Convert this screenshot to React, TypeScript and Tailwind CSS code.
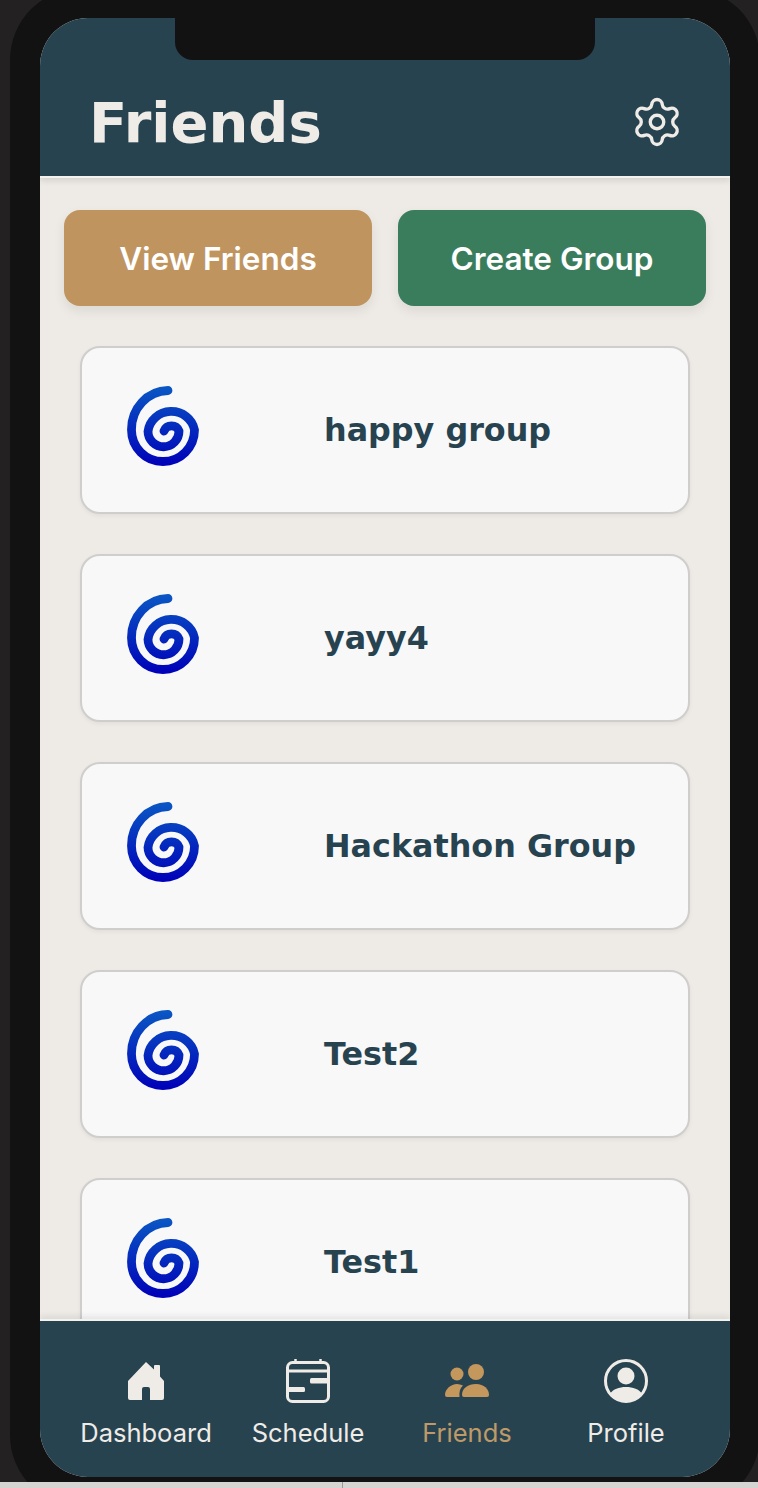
import { Settings } from 'lucide-react'

const groups = ['happy group', 'yayy4', 'Hackathon Group', 'Test2', 'Test1']

function Spiral({ id }: { id: string }) {
  return (
    <svg className="-mt-[8px]" width="72" height="80" viewBox="0 0 72 80" fill="none">
      <defs>
        <linearGradient id={id} gradientUnits="userSpaceOnUse" x1="0" y1="0" x2="0" y2="80">
          <stop offset="0" stopColor="#0a58c4" />
          <stop offset="1" stopColor="#0000b8" />
        </linearGradient>
      </defs>
      <path
        d="M41 4.500A37 39 0 0 0 4.500 44A31.500 31.500 0 0 0 67.500 44A23.500 22.500 0 0 0 21 45.500A15.500 15.500 0 0 0 52 45A8 8 0 0 0 37 45"
        stroke={`url(#${id})`}
        strokeWidth="8.800"
        strokeLinecap="round"
      />
    </svg>
  )
}

function HomeIcon() {
  return (
    <svg width="36" height="38" viewBox="0 0 36 38" fill="#efece8">
      <path d="M18 0L26 7.500V4a1 1 0 0 1 1-1h4a1 1 0 0 1 1 1v10.500L36 19V36a2 2 0 0 1-2 2H22V27a2 2 0 0 0-2-2h-4a2 2 0 0 0-2 2V38H2a2 2 0 0 1-2-2V19Z" />
    </svg>
  )
}

function ScheduleIcon() {
  return (
    <svg width="44" height="44" viewBox="0 0 44 44" fill="none">
      <rect x="1.500" y="3.500" width="41" height="39" rx="5" stroke="#efece8" strokeWidth="3" />
      <path d="M1.500 12H42.500" stroke="#efece8" strokeWidth="3" />
      <path d="M9.500 0V4M34.500 0V4" stroke="#efece8" strokeWidth="2.500" />
      <rect x="24" y="19" width="20" height="5.500" rx="1.500" fill="#efece8" />
      <rect x="0" y="28" width="19" height="5" rx="1.500" fill="#efece8" />
    </svg>
  )
}

function FriendsIcon() {
  return (
    <svg width="44" height="34" viewBox="0 0 44 34" fill="#c4975d">
      <circle cx="31" cy="8" r="8" />
      <circle cx="12" cy="10" r="6.500" />
      <path d="M17 31C17 24 23 20 31 20S44 25 44 31a2 2 0 0 1-2 2H19a2 2 0 0 1-2-2Z" />
      <path d="M0 31C0 25 6 20 12 20c2 0 4 .5 6 1.500C15 24 14 28 14.500 33H2a2 2 0 0 1-2-2Z" />
    </svg>
  )
}

function ProfileIcon() {
  return (
    <svg width="44" height="44" viewBox="0 0 44 44" fill="none">
      <circle cx="22" cy="22" r="20.500" stroke="#efece8" strokeWidth="3" />
      <circle cx="22" cy="17" r="8.500" fill="#efece8" />
      <path d="M6 35C9 30 15 28 22 28S35 30 38 35C34 40 28 43 22 43S10 40 6 35Z" fill="#efece8" />
    </svg>
  )
}

function NavItem({ icon, label, active }: { icon: React.ReactNode; label: string; active?: boolean }) {
  return (
    <div className="flex flex-col items-center">
      <div className="h-[44px] flex items-center justify-center">{icon}</div>
      <span
        className={`mt-[13px] text-[25.500px] leading-[34px] font-['Inter',sans-serif] ${
          active ? 'text-[#bf9a68]' : 'text-[#efece8]'
        }`}
      >
        {label}
      </span>
    </div>
  )
}

export default function App() {
  return (
    <div className="w-[758px] h-[1488px] overflow-hidden flex flex-col bg-[#d6d5d3]">
      <div className="h-[1482px] overflow-hidden bg-[#232122] shrink-0">
        {/* Phone frame */}
        <div className="ml-[10px] -mt-[12px] w-[750px] h-[1519px] p-[30px] rounded-[72px] bg-[#131213]">
          <div className="relative w-[690px] h-[1459px] rounded-[48px] overflow-hidden flex flex-col bg-[#eeebe6]">
            <div className="absolute top-0 left-[135px] w-[420px] h-[42px] rounded-b-[18px] bg-[#131213] z-20" />

            {/* Header */}
            <div className="relative z-10 h-[160px] shrink-0 pl-[49px] pr-[46px] pt-[70px] flex items-start justify-between bg-[#284350] border-b-2 border-[#f4f2ef] shadow-[0_3px_6px_rgba(0,0,0,0.1)]">
              <h1 className="text-[56px] leading-[70px] font-bold text-[#efece8] font-['DejaVu_Sans',sans-serif]">
                Friends
              </h1>
              <Settings className="mt-[7px] text-[#efece8]" size={54} strokeWidth={1.500} />
            </div>

            {/* Content */}
            <div className="flex-1 min-h-0 overflow-hidden">
              <div className="px-[24px] pt-[32px] flex gap-[26px]">
                {['View Friends', 'Create Group'].map((label, i) => (
                  <button
                    key={label}
                    className={`flex-1 h-[96px] pt-[2px] rounded-[16px] text-[31.500px] font-semibold text-white font-['Inter',sans-serif] shadow-[0_5px_12px_rgba(0,0,0,0.08)] ${
                      i === 0 ? 'bg-[#bf945f]' : 'bg-[#3a7d5d]'
                    }`}
                  >
                    {label}
                  </button>
                ))}
              </div>
              <div className="mt-[40px] px-[40px] flex flex-col gap-[40px]">
                {groups.map((name, i) => (
                  <div
                    key={name}
                    className="h-[168px] shrink-0 pl-[45px] flex items-center rounded-[20px] border-2 border-[#cfcecd] bg-[#f8f8f8] shadow-[0_2px_4px_rgba(0,0,0,0.05)]"
                  >
                    <Spiral id={`spiral-${i}`} />
                    <span className="ml-[125px] text-[31.800px] leading-[48px] -mt-[1px] font-bold text-[#284350] font-['DejaVu_Sans',sans-serif]">
                      {name}
                    </span>
                  </div>
                ))}
              </div>
            </div>

            {/* Bottom nav */}
            <div className="relative z-10 h-[158px] shrink-0 pl-[25px] pt-[38px] grid grid-cols-[162px_162px_156px_162px] bg-[#284350] border-t-2 border-[#f4f2ef] shadow-[0_-3px_6px_rgba(0,0,0,0.08)]">
              <NavItem icon={<HomeIcon />} label="Dashboard" />
              <NavItem icon={<ScheduleIcon />} label="Schedule" />
              <NavItem icon={<FriendsIcon />} label="Friends" active />
              <NavItem icon={<ProfileIcon />} label="Profile" />
            </div>
          </div>
        </div>
      </div>
      <div className="flex-1 flex">
        <div className="w-[343px] border-r border-[#9a9a98]" />
      </div>
    </div>
  )
}
